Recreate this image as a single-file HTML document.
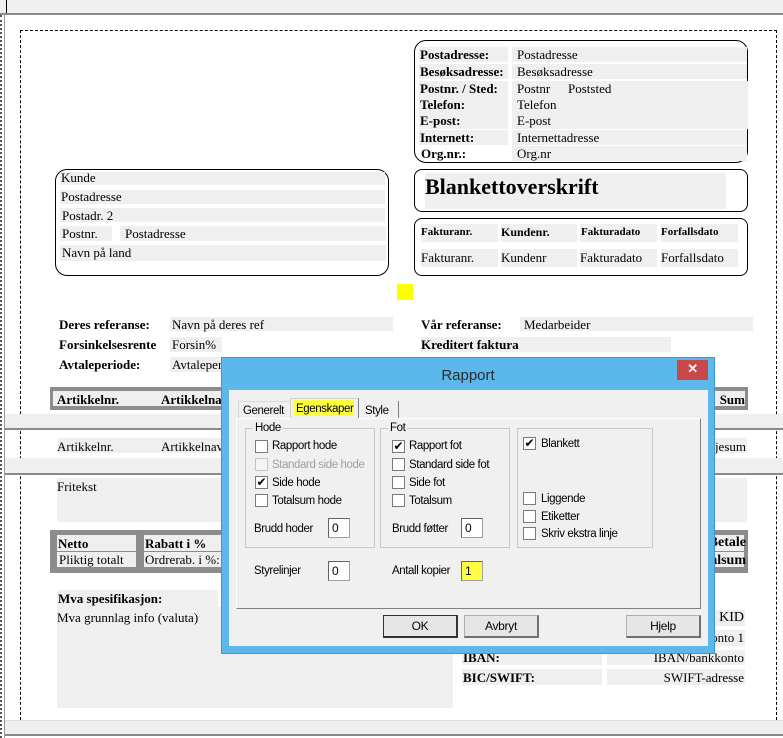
<!DOCTYPE html>
<html><head><meta charset="utf-8"><style>
*{margin:0;padding:0;box-sizing:border-box}
body{width:783px;height:738px;position:relative;overflow:hidden;background:#fff;font-family:"Liberation Serif",serif;font-size:13px;color:#000}
div,span{position:absolute}
.g{background:#efefef}
.t{white-space:nowrap;line-height:15px}
.b{font-weight:bold}
.box{border:1px solid #000;border-radius:12px}
.s{font-family:"Liberation Sans",sans-serif;font-size:11.5px;letter-spacing:-0.4px;white-space:nowrap;line-height:14px}
.cb{width:13px;height:13px;background:#fff;border:1px solid #7a7a7a}
.cb.d{background:#f4f4f4;border-color:#c4c4c4}
.ck{font-size:12px;line-height:11px;text-align:center;font-family:"DejaVu Sans",sans-serif}
.inp{background:#fff;border:1px solid #a0a0a0;border-top-color:#646464;border-left-color:#646464;width:22px;height:20px;padding:2px 3px;font-family:"Liberation Sans",sans-serif;font-size:12px}
.btn{background:#e6e6e6;border:1px solid #adadad;border-bottom:2px solid #707070;border-right:2px solid #707070;height:23px;font-family:"Liberation Sans",sans-serif;font-size:12px;letter-spacing:-0.3px;text-align:center;line-height:20px}
.grp{border:1px solid #c8c8c8}
</style></head><body>
<div style="left:0;top:0;width:783px;height:13px;background:#f0f0f0"></div>
<div style="left:6px;top:0;width:1px;height:13px;background:#000"></div>
<div style="left:0;top:13px;width:783px;height:2px;background:#8a8a8a"></div>
<div style="left:0;top:15px;width:2px;height:723px;border-left:2px dotted #555"></div>
<div style="left:4px;top:15px;width:1px;height:723px;background:#999"></div>
<div style="left:20px;top:30px;width:757px;height:700px;border:1px dashed #000;border-bottom:none"></div>

<div class="box" style="left:414px;top:40px;width:334px;height:123px"></div>
<div class="g" style="left:419px;top:47px;width:89px;height:15px"></div><div class="g" style="left:512px;top:47px;width:235px;height:15px"></div>
<div class="g" style="left:419px;top:64px;width:89px;height:15px"></div><div class="g" style="left:512px;top:64px;width:235px;height:15px"></div>
<div class="g" style="left:419px;top:81px;width:89px;height:48px"></div><div class="g" style="left:512px;top:81px;width:236px;height:48px"></div>
<div class="g" style="left:419px;top:130px;width:89px;height:15px"></div><div class="g" style="left:512px;top:130px;width:235px;height:15px"></div>
<div class="g" style="left:512px;top:146px;width:235px;height:15px"></div>
<span class="t b" style="left:420px;top:47px">Postadresse:</span><span class="t" style="left:517px;top:47px">Postadresse</span>
<span class="t b" style="left:420px;top:64px">Besøksadresse:</span><span class="t" style="left:517px;top:64px">Besøksadresse</span>
<span class="t b" style="left:420px;top:81px">Postnr. / Sted:</span><span class="t" style="left:517px;top:81px">Postnr</span><span class="t" style="left:568px;top:81px">Poststed</span>
<span class="t b" style="left:420px;top:97px">Telefon:</span><span class="t" style="left:517px;top:97px">Telefon</span>
<span class="t b" style="left:420px;top:113px">E-post:</span><span class="t" style="left:517px;top:113px">E-post</span>
<span class="t b" style="left:420px;top:130px">Internett:</span><span class="t" style="left:517px;top:130px">Internettadresse</span>
<span class="t b" style="left:421px;top:146px">Org.nr.:</span><span class="t" style="left:517px;top:146px">Org.nr</span>

<div class="box" style="left:55px;top:169px;width:334px;height:107px"></div>
<div class="g" style="left:60px;top:172px;width:325px;height:13px"></div>
<div class="g" style="left:60px;top:190px;width:325px;height:14px"></div>
<div class="g" style="left:60px;top:208px;width:325px;height:14px"></div>
<div class="g" style="left:60px;top:226px;width:52px;height:15px"></div><div class="g" style="left:120px;top:226px;width:266px;height:15px"></div>
<div class="g" style="left:60px;top:245px;width:326px;height:16px"></div>
<span class="t" style="left:61px;top:170px">Kunde</span>
<span class="t" style="left:61px;top:189px">Postadresse</span>
<span class="t" style="left:62px;top:208px">Postadr. 2</span>
<span class="t" style="left:62px;top:226px">Postnr.</span><span class="t" style="left:125px;top:226px">Postadresse</span>
<span class="t" style="left:62px;top:245px">Navn på land</span>

<div class="box" style="left:414px;top:169px;width:334px;height:43px;border-radius:8px"></div>
<div class="g" style="left:425px;top:173px;width:301px;height:36px"></div>
<span class="t b" style="left:425px;top:175px;font-size:22px;line-height:24px">Blankettoverskrift</span>

<div class="box" style="left:414px;top:218px;width:334px;height:58px;border-radius:8px"></div>
<div class="g" style="left:421px;top:224px;width:77px;height:18px"></div><div class="g" style="left:501px;top:224px;width:76px;height:18px"></div><div class="g" style="left:580px;top:224px;width:77px;height:18px"></div><div class="g" style="left:661px;top:224px;width:77px;height:18px"></div>
<div class="g" style="left:421px;top:249px;width:77px;height:18px"></div><div class="g" style="left:501px;top:249px;width:76px;height:18px"></div><div class="g" style="left:580px;top:249px;width:77px;height:18px"></div><div class="g" style="left:661px;top:249px;width:77px;height:18px"></div>
<span class="t b" style="left:421px;top:225px;font-size:11px">Fakturanr.</span><span class="t b" style="left:501px;top:225px;font-size:12px">Kundenr.</span><span class="t b" style="left:581px;top:225px;font-size:11px">Fakturadato</span><span class="t b" style="left:661px;top:225px;font-size:11px">Forfallsdato</span>
<span class="t" style="left:421px;top:250px">Fakturanr.</span><span class="t" style="left:501px;top:250px">Kundenr</span><span class="t" style="left:580px;top:250px">Fakturadato</span><span class="t" style="left:661px;top:250px">Forfallsdato</span>

<div style="left:397px;top:284px;width:16px;height:16px;background:#ffff00"></div>

<div class="g" style="left:170px;top:317px;width:223px;height:14px"></div>
<div class="g" style="left:520px;top:317px;width:233px;height:14px"></div>
<div class="g" style="left:170px;top:337px;width:52px;height:15px"></div>
<div class="g" style="left:421px;top:337px;width:250px;height:15px"></div>
<div class="g" style="left:170px;top:357px;width:223px;height:15px"></div>
<span class="t b" style="left:59px;top:317px">Deres referanse:</span><span class="t" style="left:172px;top:317px">Navn på deres ref</span>
<span class="t b" style="left:421px;top:317px">Vår referanse:</span><span class="t" style="left:524px;top:317px">Medarbeider</span>
<span class="t b" style="left:59px;top:337px;width:110px;overflow:hidden">Forsinkelsesrente</span><span class="t" style="left:172px;top:337px">Forsin%</span>
<span class="t b" style="left:421px;top:337px">Kreditert faktura</span>
<span class="t b" style="left:59px;top:357px">Avtaleperiode:</span><span class="t" style="left:172px;top:357px">Avtaleperiode</span>

<div style="left:50px;top:387px;width:698px;height:23px;background:#8c8c8c"></div>
<div class="g" style="left:53px;top:391px;width:692px;height:15px"></div>
<span class="t b" style="left:57px;top:392px">Artikkelnr.</span><span class="t b" style="left:161px;top:392px">Artikkelnavn</span><span class="t b" style="right:38px;top:392px">Sum</span>
<div style="left:5px;top:414px;width:778px;height:16px;background:#efefef;border-bottom:2px solid #8a8a8a"></div>
<div class="g" style="left:57px;top:438px;width:690px;height:15px"></div>
<span class="t" style="left:57px;top:439px">Artikkelnr.</span><span class="t" style="left:161px;top:439px">Artikkelnavn</span><span class="t" style="right:37px;top:439px">Linjesum</span>
<div style="left:5px;top:458px;width:778px;height:17px;background:#efefef;border-bottom:2px solid #8a8a8a"></div>
<div class="g" style="left:57px;top:478px;width:690px;height:44px"></div>
<span class="t" style="left:57px;top:479px">Fritekst</span>

<div style="left:50px;top:530px;width:698px;height:43px;background:#8c8c8c"></div>
<div class="g" style="left:57px;top:535px;width:79px;height:16px"></div><div class="g" style="left:144px;top:535px;width:600px;height:16px"></div>
<div class="g" style="left:57px;top:552px;width:79px;height:15px"></div><div class="g" style="left:144px;top:552px;width:600px;height:15px"></div>
<span class="t b" style="left:58px;top:536px">Netto</span><span class="t b" style="left:145px;top:536px">Rabatt i %</span><span class="t b" style="right:37px;top:535px;font-size:14px">Betale</span>
<span class="t" style="left:59px;top:552px">Pliktig totalt</span><span class="t" style="left:145px;top:552px">Ordrerab. i %:</span><span class="t b" style="right:37px;top:553px;font-size:14px">Totalsum</span>

<div class="g" style="left:57px;top:590px;width:161px;height:17px"></div>
<div class="g" style="left:57px;top:607px;width:396px;height:101px"></div>
<span class="t b" style="left:58px;top:591px">Mva spesifikasjon:</span>
<span class="t" style="left:57px;top:610px">Mva grunnlag info (valuta)</span>
<div class="g" style="left:462px;top:610px;width:140px;height:16px"></div><div class="g" style="left:607px;top:610px;width:138px;height:16px"></div>
<div class="g" style="left:462px;top:630px;width:140px;height:16px"></div><div class="g" style="left:607px;top:630px;width:138px;height:16px"></div>
<div class="g" style="left:462px;top:650px;width:140px;height:15px"></div><div class="g" style="left:607px;top:650px;width:138px;height:15px"></div>
<div class="g" style="left:462px;top:669px;width:140px;height:16px"></div><div class="g" style="left:607px;top:669px;width:138px;height:16px"></div>
<span class="t" style="right:39px;top:610px;font-size:14px">KID</span>
<span class="t" style="right:39px;top:630px">Bankkonto 1</span>
<span class="t b" style="left:463px;top:650px">IBAN:</span><span class="t" style="right:39px;top:650px">IBAN/bankkonto</span>
<span class="t b" style="left:463px;top:670px">BIC/SWIFT:</span><span class="t" style="right:39px;top:670px">SWIFT-adresse</span>
<div style="left:5px;top:720px;width:778px;height:16px;background:#efefef;border-top:1px solid #ddd;border-bottom:2px solid #8a8a8a"></div>

<div style="left:221px;top:357px;width:494px;height:297px;background:#5cb8ea;border:1px solid #3c98d0"></div>
<span class="s" style="left:221px;top:367px;width:494px;text-align:center;font-size:15px;line-height:18px;color:#2a2a2a;letter-spacing:0">Rapport</span>
<div style="left:677px;top:360px;width:31px;height:20px;background:#c74848"></div>
<span class="s" style="left:677px;top:362px;width:31px;text-align:center;color:#fff;font-size:13px;font-weight:bold">✕</span>
<div style="left:229px;top:390px;width:479px;height:256px;background:#f0f0f0"></div>
<div style="left:238px;top:401px;width:53px;height:18px;border:1px solid #d8d8d8;border-bottom:none;background:#f0f0f0"></div>
<span class="s" style="left:243px;top:404px">Generelt</span>
<div style="left:290px;top:398px;width:69px;height:21px;border:1px solid #d0d0d0;border-right:1px solid #808080;border-bottom:none;background:#f0f0f0"></div>
<div style="left:294px;top:400px;width:60px;height:16px;background:#ffff40"></div>
<span class="s" style="left:296px;top:402px">Egenskaper</span>
<div style="left:359px;top:401px;width:40px;height:18px;border-right:1px solid #808080;background:#f0f0f0"></div>
<span class="s" style="left:365px;top:404px">Style</span>
<div style="left:236px;top:418px;width:465px;height:191px;border-top:1px solid #fff;border-left:1px solid #fff;border-right:1px solid #808080;border-bottom:1px solid #808080"></div>
<div style="left:290px;top:418px;width:69px;height:2px;background:#f0f0f0"></div>
<div class="grp" style="left:245px;top:428px;width:130px;height:120px"></div>
<span class="s" style="left:253px;top:421px;background:#f0f0f0;padding:0 2px">Hode</span>
<div class="grp" style="left:380px;top:428px;width:130px;height:120px"></div>
<span class="s" style="left:388px;top:421px;background:#f0f0f0;padding:0 2px">Fot</span>
<div class="grp" style="left:517px;top:428px;width:136px;height:120px"></div>

<div class="cb" style="left:255px;top:440px"></div><span class="s" style="left:272px;top:439px">Rapport hode</span>
<div class="cb d" style="left:255px;top:458px"></div><span class="s" style="left:272px;top:458px;color:#a0a0a0">Standard side hode</span>
<div class="cb ck" style="left:255px;top:476px">✔</div><span class="s" style="left:272px;top:476px">Side hode</span>
<div class="cb" style="left:255px;top:494px"></div><span class="s" style="left:272px;top:494px">Totalsum hode</span>
<span class="s" style="left:254px;top:522px">Brudd hoder</span><div class="inp" style="left:328px;top:518px">0</div>

<div class="cb ck" style="left:392px;top:440px">✔</div><span class="s" style="left:409px;top:439px">Rapport fot</span>
<div class="cb" style="left:392px;top:458px"></div><span class="s" style="left:409px;top:458px">Standard side fot</span>
<div class="cb" style="left:392px;top:476px"></div><span class="s" style="left:409px;top:476px">Side fot</span>
<div class="cb" style="left:392px;top:494px"></div><span class="s" style="left:409px;top:494px">Totalsum</span>
<span class="s" style="left:392px;top:522px">Brudd føtter</span><div class="inp" style="left:461px;top:518px">0</div>

<div class="cb ck" style="left:523px;top:437px">✔</div><span class="s" style="left:541px;top:437px">Blankett</span>
<div class="cb" style="left:523px;top:492px"></div><span class="s" style="left:541px;top:492px">Liggende</span>
<div class="cb" style="left:523px;top:510px"></div><span class="s" style="left:541px;top:510px">Etiketter</span>
<div class="cb" style="left:523px;top:527px"></div><span class="s" style="left:541px;top:527px">Skriv ekstra linje</span>

<span class="s" style="left:254px;top:564px">Styrelinjer</span><div class="inp" style="left:328px;top:561px">0</div>
<span class="s" style="left:392px;top:564px">Antall kopier</span><div class="inp" style="left:461px;top:561px;background:#ffff40">1</div>

<div class="btn" style="left:383px;top:615px;width:75px;border-color:#333;border-bottom-color:#333;border-right-color:#333">OK</div>
<div class="btn" style="left:464px;top:615px;width:75px">Avbryt</div>
<div class="btn" style="left:626px;top:615px;width:75px">Hjelp</div>
</body></html>
